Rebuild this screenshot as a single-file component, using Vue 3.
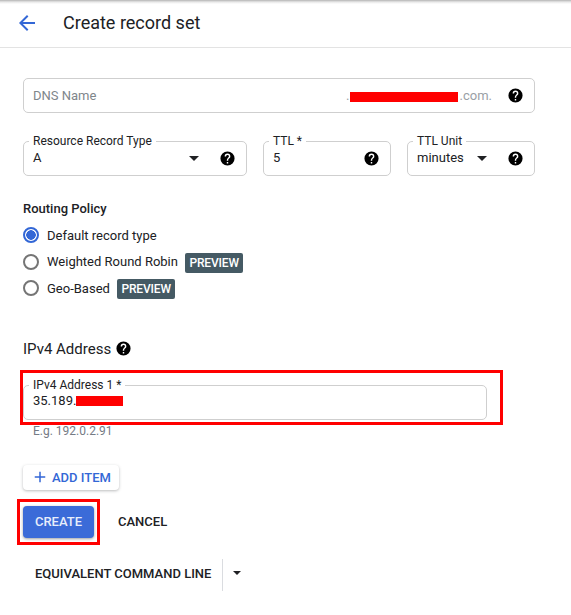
<script setup>
const helpPath = 'M12 2a10 10 0 1 0 0 20 10 10 0 0 0 0-20zm1 17h-2v-2h2v2zm2.07-7.75-.9.92C13.45 12.9 13 13.5 13 15h-2v-.5c0-1.1.45-2.1 1.17-2.83l1.24-1.26A2 2 0 1 0 10 9H8a4 4 0 1 1 8 0c0 .88-.36 1.68-.93 2.25z'
</script>

<template>
  <div class="page">
    <header class="topbar">
      <svg class="back" viewBox="0 0 24 24"><path d="M20 11H7.83l5.59-5.59L12 4l-8 8 8 8 1.41-1.41L7.83 13H20v-2z" /></svg>
      <h1>Create record set</h1>
    </header>

    <main class="content">
      <div class="field dns">
        <span class="placeholder">DNS Name</span>
        <span class="domain">.<span class="redact dns-redact"></span>.com.</span>
        <svg class="help" viewBox="0 0 24 24"><path :d="helpPath" /></svg>
      </div>

      <div class="row">
        <div class="field type">
          <span class="label">Resource Record Type</span>
          <span class="value">A</span>
          <span class="caret push"></span>
          <svg class="help" viewBox="0 0 24 24"><path :d="helpPath" /></svg>
        </div>
        <div class="field ttl">
          <span class="label">TTL *</span>
          <span class="value">5</span>
          <svg class="help push" viewBox="0 0 24 24"><path :d="helpPath" /></svg>
        </div>
        <div class="field unit">
          <span class="label">TTL Unit</span>
          <span class="value">minutes</span>
          <span class="caret push"></span>
          <svg class="help" viewBox="0 0 24 24"><path :d="helpPath" /></svg>
        </div>
      </div>

      <section class="routing">
        <div class="routing-title">Routing Policy</div>
        <div class="radio-row">
          <span class="radio on"></span>
          <span>Default record type</span>
        </div>
        <div class="radio-row">
          <span class="radio"></span>
          <span>Weighted Round Robin</span>
          <span class="chip">PREVIEW</span>
        </div>
        <div class="radio-row">
          <span class="radio"></span>
          <span>Geo-Based</span>
          <span class="chip">PREVIEW</span>
        </div>
      </section>

      <div class="ipv-title">
        <span>IPv4 Address</span>
        <svg viewBox="0 0 24 24"><path :d="helpPath" /></svg>
      </div>

      <div class="address-wrap">
        <div class="field address">
          <span class="label">IPv4 Address 1 *</span>
          <span class="value">35.189.<span class="redact ip-redact"></span></span>
        </div>
        <span class="outline address-outline"></span>
      </div>
      <div class="hint">E.g. 192.0.2.91</div>

      <button class="add-btn" type="button">
        <svg viewBox="0 0 24 24"><path d="M19 13h-6v6h-2v-6H5v-2h6V5h2v6h6v2z" /></svg>
        <span>ADD ITEM</span>
      </button>

      <div class="actions">
        <div class="create-wrap">
          <button class="create" type="button">CREATE</button>
          <span class="outline create-outline"></span>
        </div>
        <button class="cancel" type="button">CANCEL</button>
      </div>

      <div class="command">
        <span class="command-text">EQUIVALENT COMMAND LINE</span>
        <span class="command-divider"></span>
        <span class="caret command-caret"></span>
      </div>
    </main>
  </div>
</template>

<style>
html, body { margin: 0; background: #fff; overflow: hidden; }
</style>

<style scoped>
.page {
  width: 571px;
  height: 615px;
  overflow: hidden;
  font-family: Roboto, "Liberation Sans", sans-serif;
  color: #202124;
  background: linear-gradient(#b4b4b4, #e8e8e8 2px, #fff 4px);
}
.topbar {
  height: 45px;
  padding: 0 0 2px 15px;
  display: flex;
  align-items: center;
  border-bottom: 1px solid #e3e3e3;
}
.back { width: 24px; height: 24px; fill: #3367d6; }
h1 {
  margin: 0 0 0 24px;
  font-size: 18px;
  font-weight: 400;
  line-height: 24px;
}
.content { padding: 30px 36px 0 23px; }
.field {
  position: relative;
  box-sizing: border-box;
  display: flex;
  align-items: center;
  border: 1px solid #cfcfcf;
  border-radius: 5px;
  background: #fff;
  padding: 0 10px 0 9px;
}
.dns { height: 35px; width: 512px; }
.placeholder { font-size: 13px; color: #80868b; }
.domain {
  margin-left: auto;
  margin-right: 15px;
  font-size: 13px;
  color: #9aa0a6;
  display: flex;
  align-items: center;
}
.redact { display: inline-block; background: #f00; }
.dns-redact { width: 108px; height: 10px; margin: 2px 2px 0 0; }
.help { width: 17px; height: 17px; fill: #000; flex: none; }
.row { display: flex; gap: 16px; margin-top: 28px; }
.row .field { height: 35px; }
.type { width: 224px; }
.ttl { width: 128px; }
.unit { width: 128px; }
.label {
  position: absolute;
  left: 5px;
  top: -8px;
  padding: 0 4px;
  background: #fff;
  font-size: 12px;
  line-height: 14px;
  color: #202124;
}
.value { font-size: 13px; color: #202124; margin-top: -2px; }
.caret {
  width: 0;
  height: 0;
  border-left: 5px solid transparent;
  border-right: 5px solid transparent;
  border-top: 5px solid #202124;
  flex: none;
}
.push { margin-left: auto; }
.caret + .help { margin-left: 20px; }
.routing { margin-top: 25px; }
.routing-title { font-size: 13px; line-height: 15px; font-weight: 500; }
.radio-row {
  display: flex;
  align-items: center;
  height: 26.5px;
  font-size: 13px;
}
.routing-title + .radio-row { margin-top: 6px; }
.radio {
  width: 16px;
  height: 16px;
  box-sizing: border-box;
  border: 2px solid #757575;
  border-radius: 50%;
  margin-right: 8px;
  flex: none;
}
.radio.on { border-color: #3367d6; background: radial-gradient(circle, #3367d6 4.5px, #fff 5px); }
.chip {
  margin: 2px 0 0 7.5px;
  background: #455a64;
  color: #fff;
  border-radius: 2px;
  font-size: 12px;
  font-weight: 500;
  line-height: 20px;
  letter-spacing: -0.15px;
  padding: 0 4px;
}
.ipv-title {
  margin-top: 37px;
  display: flex;
  align-items: center;
  gap: 4px;
  font-size: 15px;
  line-height: 20px;
}
.ipv-title svg { width: 17px; height: 17px; fill: #000; }
.address-wrap { position: relative; margin-top: 26px; }
.address { width: 464px; height: 35px; }
.address .value { margin-top: -3px; display: flex; align-items: center; }
.ip-redact { width: 47px; height: 10px; }
.outline { position: absolute; border: 3px solid #f00; box-sizing: border-box; pointer-events: none; }
.address-outline { left: -3px; top: -15px; width: 483px; height: 55px; }
.hint { margin: 4px 0 0 10px; font-size: 12px; line-height: 14px; color: #757b85; }
.add-btn {
  margin-top: 27px;
  display: flex;
  align-items: center;
  width: 96px;
  height: 25px;
  padding: 0 0 0 8px;
  border: 0;
  border-radius: 4px;
  background: #fff;
  box-shadow: 0 1px 3px rgba(60, 64, 67, .35);
  color: #3367d6;
  font: 500 13px Roboto, sans-serif;
}
.add-btn svg { width: 18px; height: 18px; fill: #3367d6; margin-right: 3px; }
.actions { display: flex; align-items: center; margin-top: 16px; }
.create-wrap { position: relative; }
.create {
  display: block;
  width: 71px;
  height: 32px;
  border: 0;
  padding: 0;
  border-radius: 4px;
  background: #3b6bd8;
  box-shadow: 0 1px 3px rgba(60, 64, 67, .5);
  color: #e8eefb;
  font: 500 13px Roboto, sans-serif;
}
.create-outline { left: -6px; top: -7px; width: 83px; height: 46px; }
.cancel {
  margin-left: 24px;
  padding: 0;
  border: 0;
  background: none;
  color: #202124;
  font: 500 13px Roboto, sans-serif;
}
.command { display: flex; align-items: center; height: 32px; margin-top: 20px; padding-left: 12px; }
.command-text { font-size: 13px; font-weight: 500; }
.command-divider { width: 1px; height: 32px; background: #dadce0; margin: 2px 0 0 11px; }
.command-caret {
  margin: -2px 0 0 10px;
  border-left-width: 4px;
  border-right-width: 4px;
  border-top-width: 4px;
}
</style>
